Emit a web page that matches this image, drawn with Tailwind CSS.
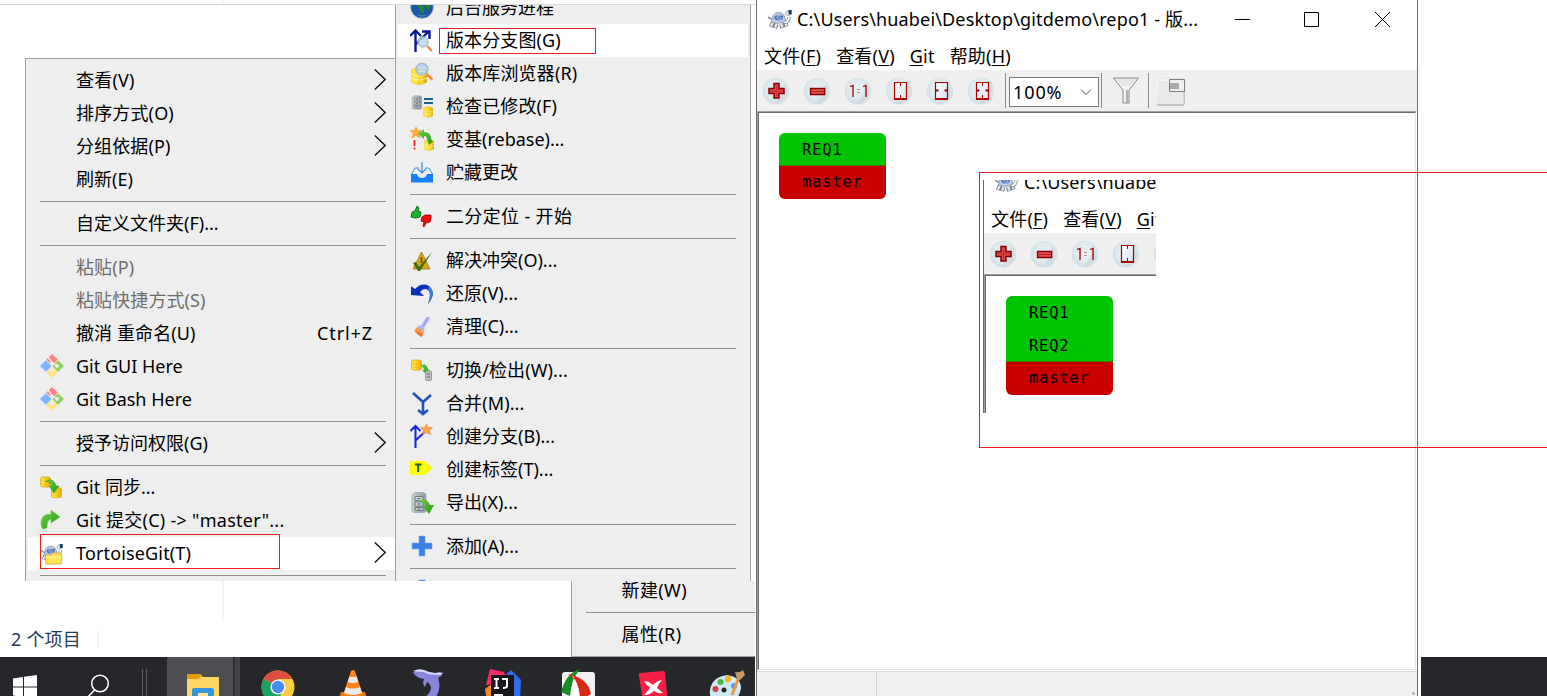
<!DOCTYPE html>
<html lang="zh-CN">
<head>
<meta charset="utf-8">
<title>TortoiseGit</title>
<script src="https://cdn.jsdelivr.net/npm/@tailwindcss/browser@4"></script>
</head>
<body class="w-[1547px] h-[696px] overflow-hidden bg-white text-black text-[18px] leading-[33px] whitespace-nowrap font-['Noto_Sans','Noto_Sans_CJK_SC',sans-serif]">
<svg class="absolute w-0 h-0">
  <defs>
    <linearGradient id="gold" x1="0" x2="1"><stop offset="0" stop-color="#ffe94d"/><stop offset=".5" stop-color="#fbd714"/><stop offset="1" stop-color="#dfa60c"/></linearGradient>
    <linearGradient id="steel" x1="0" x2="1"><stop offset="0" stop-color="#c9d0d4"/><stop offset="1" stop-color="#8d979d"/></linearGradient>
    <linearGradient id="leaf" x1="0" x2="1" y1="0" y2="1"><stop offset="0" stop-color="#6fd04a"/><stop offset="1" stop-color="#1f9a0c"/></linearGradient>
    <radialGradient id="orb" cx=".5" cy=".45" r=".55"><stop offset="0" stop-color="#eaf1f4"/><stop offset=".65" stop-color="#dfe9ee"/><stop offset="1" stop-color="#cfdde4"/></radialGradient>
    <linearGradient id="page" x1="0" x2="1" y1="0" y2="1"><stop offset="0" stop-color="#fff"/><stop offset="1" stop-color="#d5e2f5"/></linearGradient>
  </defs>
  <symbol id="chev" viewBox="0 0 12 21"><path d="M.8.6 11.2 10.5.8 20.4" fill="none" stroke="#111" stroke-width="1.4"/></symbol>
  <symbol id="git" viewBox="0 0 24 24">
    <path d="M12 0l5.600 5.600L12 11.200 6.400 5.600z" fill="#ff7f80"/><path d="M17.900 6.200L24 12l-6.100 6L12.400 12z" fill="#8dd35f"/><path d="M12 12.600l5.600 5.700L12 24l-5.600-5.700z" fill="#ffe680"/>
    <path d="M8 3l5 7M12 10v7M12 9l5 3" stroke="#eee" stroke-width="1.400" fill="none"/><circle cx="12" cy="9.500" r="1.800" fill="#eee"/><circle cx="17" cy="12" r="1.900" fill="#eee"/><circle cx="12" cy="16.500" r="1.900" fill="#eee"/><path d="M6 6.200l5.600 5.800L6 17.800 0 12z" fill="#80b3ff"/>
  </symbol>
  <symbol id="coin" viewBox="0 0 12 12"><rect x=".5" y=".5" width="11" height="11" rx="2.500" fill="url(#gold)" stroke="#d0a428" stroke-width=".8"/><path d="M1 4q5 2 10 0M1 8q5 2 10 0M6 1v10" fill="none" stroke="#eab818" stroke-width=".6"/></symbol>
  <symbol id="sync" viewBox="0 0 24 24"><use href="#coin" x="0" y="0" width="11" height="12"/><use href="#coin" x="11" y="11" width="11" height="11.500"/><path d="M5 6q6-5 10 1l1 3h3l-5 7-5-7h3q-2-5-7-4z" fill="url(#leaf)" stroke="#4e9f33" stroke-width=".6"/></symbol>
  <symbol id="commit" viewBox="0 0 24 24"><path d="M1 14Q1 5 11 5V1l9 7-9 6v-4Q7 10 7 19L3 20Q1 18 1 14z" fill="url(#leaf)" stroke="#74c74c" stroke-width=".6"/></symbol>
  <symbol id="turtle" viewBox="0 0 24 24">
    <path d="M5 12l-2 5M8.500 14l-1.500 4M13 14l1.500 4M17 12l1.500 4.500" stroke="#6c737d" stroke-width="4.200"/><path d="M5 12l-2 4.500M8.500 14l-1.500 3.500M13 14l1.500 3.500M17 12l1.500 4" stroke="#e8ebee" stroke-width="2.400"/>
    <path d="M0 7l4 2.500" stroke="#8b939e" stroke-width="1.500"/><path d="M16 12q5 1 5-5" stroke="#7b838d" stroke-width="3.600" fill="none"/><path d="M16 12q5 1 5-6" stroke="#f3f5f7" stroke-width="2.200" fill="none"/>
    <path d="M3.500 12Q4 2.500 10.500 2.500T17.500 11q-7 4-14 1z" fill="#c2d1ea" stroke="#8390a6" stroke-width=".9"/><ellipse cx="10.500" cy="7.800" rx="5" ry="3.300" fill="#8eabe2"/><path d="M9 6.200q-2.500 0-2 1.600t2 1.600V8.100M11 6.200v3M12.300 6.200h3M13.800 6.200v3" stroke="#2c4d94" fill="none" stroke-width=".8"/>
    <rect x="17.500" y="1" width="5" height="4.500" rx="2" fill="#eef1f4" stroke="#7b8692" stroke-width=".6"/><path d="M20.500 0h3.200v4.500h-3.200z" fill="#0f4560"/>
  </symbol>
  <symbol id="tfolder" viewBox="0 0 24 24"><use href="#turtle" width="24" height="22" y="1"/><path d="M5 12h6l2-2h8v3h1l-1 8H6z" fill="#ffe457" stroke="#d2a72b" stroke-width=".8"/><path d="M6 14h15" stroke="#fff5a0"/></symbol>
  <symbol id="globe" viewBox="0 0 24 24"><circle cx="12" cy="12" r="11.300" fill="#1b57a4" stroke="#8ba7c4" stroke-width=".7"/><path d="M7 6l6-1-3 5 5 2-2 7-3-3-2-5-4-3zM17 6l4 3-3 7-2-5z" fill="#258439"/><path d="M6 19q6 3 12 0-6 5-12 0z" fill="#4f9bd0"/></symbol>
  <symbol id="lens" viewBox="0 0 16 16"><path d="M10 10l5 5" stroke="#f08a3c" stroke-width="2.200"/><circle cx="6" cy="6" r="5.200" fill="#a9d1ec" fill-opacity=".85" stroke="#a7b9c4" stroke-width="1"/><path d="M2.500 5h7M3 7.500h6" stroke="#e4f4fd" stroke-width=".9"/></symbol>
  <symbol id="graph" viewBox="0 0 24 24"><path d="M5.500 23V2M0 7l5.500-5.500L11 7M6 15L18 3M12 2.500h7.500V10" fill="none" stroke="#0a1894" stroke-width="2.400"/><use href="#lens" x="7" y="7" width="16" height="16"/></symbol>
  <symbol id="stack" viewBox="0 0 16 18"><path d="M0 3q8-5 16 0v12q-8 5-16 0z" fill="url(#gold)" stroke="#e5b21a" stroke-width=".6"/><path d="M0 7q8 4 16 0M0 11q8 4 16 0M5 8v9M11 8v9" fill="none" stroke="#fff4a5" stroke-width=".9"/></symbol>
  <symbol id="repo" viewBox="0 0 24 24"><use href="#stack" x="1" y="5" width="16" height="18"/><use href="#lens" x="5" y="0" width="18.500" height="19"/></symbol>
  <symbol id="cab" viewBox="0 0 16 22"><path d="M1 3l3-2h9l2 2v16q0 2-2 2H3q-2 0-2-2z" fill="url(#steel)" stroke="#9aa3a8" stroke-width=".7"/><path d="M4 5h8v4H4zM4 10.500h8v4H4zM4 16h8v3H4z" fill="#cfd5d8" stroke="#657076" stroke-width=".9"/><path d="M6.500 7h3M6.500 12.500h3M6.500 17.500h3" stroke="#59646a" stroke-width="1.200"/></symbol>
  <symbol id="modified" viewBox="0 0 24 24"><use href="#cab" x="1" y="0" width="12" height="15"/><path d="M14 4h9M14 8h9" stroke="#1b638a" stroke-width="2"/><use href="#stack" x="13" y="11" width="10" height="12"/></symbol>
  <symbol id="rebase" viewBox="0 0 24 24"><path d="M6 0l1.700 3.500 4 .3-3 2.700 1.500 4.500L6 8.500 2 11l1.200-4.500-3-2.700 4-.3z" fill="#ffb13b" stroke="#f58f22" stroke-width=".5"/><use href="#stack" x="14" y="12" width="10" height="12"/><path d="M8 7l6-5v3q7 0 7 7l2 2-4 4-2-6q0-3-3-3v3z" fill="url(#leaf)"/><path d="M4.500 13v6M4.500 20.500v2" stroke="#f02020" stroke-width="1.800"/></symbol>
  <symbol id="stash" viewBox="0 0 24 24"><path d="M1 14L5 7h4M15 7h4l4 7" fill="#dcedfd" stroke="#4b98e8" stroke-width="1"/><path d="M1 13h6q1 4 5 4t5-4h6v8.500H1z" fill="#167ffb"/><path d="M12 1v10M8 8l4 4 4-4" stroke="#3e8bd9" stroke-width="1.200" fill="none"/></symbol>
  <symbol id="bisect" viewBox="0 0 24 24"><path d="M2 7l3-1 2-5 2 2-1 3 3 1-1 5-5 1-4-1z" fill="#16b72b" stroke="#0b5713" stroke-width=".8"/><path d="M12 12l3-2h6v4l-1 3-4 1-2 4-1-1 1-4-3-1z" fill="#f40d0d" stroke="#750909" stroke-width=".8"/></symbol>
  <symbol id="resolve" viewBox="0 0 24 24"><path d="M11.500 3L20 20H3z" fill="#dda216" stroke="#9b7a19" stroke-width=".8"/><path d="M11.500 8v6M11.500 16v1.500" stroke="#6d5508" stroke-width="1.800"/><path d="M3 14l3-1 3 5L22 3 10 22H8z" fill="#3d6e10"/></symbol>
  <symbol id="revert" viewBox="0 0 24 24"><path d="M1 4l4 3Q12 0 19 4q8 7-1 18 4-11 0-14-4-3-8 2l4 4-13-1z" fill="#0931ba"/><path d="M19 4q8 7-1 18 4-11 0-14z" fill="#3d76dc"/></symbol>
  <symbol id="clean" viewBox="0 0 24 24"><path d="M19 2q1 0 0 3l-5 8-3-2 5-8q2-2 3-1z" fill="#a6a8fb"/><path d="M10 10l5 4-2 3-6-5z" fill="#b3b4f2"/><path d="M7 12l7 5-2 5-8-6z" fill="#ff9a3c"/><path d="M5 17l8 1-2 4z" fill="#f36a44"/></symbol>
  <symbol id="switch" viewBox="0 0 24 24"><use href="#coin" x="1" y="1" width="11" height="12"/><path d="M10 8l4-2q4 2 4 6h2l-4 4-4-4h2q0-3-4-4z" fill="url(#leaf)"/><rect x="15.500" y="13" width="6" height="9.500" rx="1" fill="#b9bdbf" stroke="#8c9194" stroke-width=".8"/><path d="M17 16h3M17 19h3" stroke="#686e71"/></symbol>
  <symbol id="merge" viewBox="0 0 24 24"><path d="M3 1l10 9 8-7M13 10v12M8 18l5 4 5-4" fill="none" stroke="#2152b9" stroke-width="2.600"/></symbol>
  <symbol id="branch" viewBox="0 0 24 24"><path d="M5.500 24V3M.5 7l5-5 5 5M6 16L18 5" fill="none" stroke="#1220f0" stroke-width="2"/><path d="M16.500 0l1.500 3.500h4.500l-3 3 1 4-4-2-4 2 1-4-3-3h4z" fill="#ffa24d" stroke="#d97726" stroke-width=".5"/></symbol>
  <symbol id="tag" viewBox="0 0 24 24"><path d="M0 4h15l7 7-7 7H0z" fill="#ffff00"/><path d="M5 7.500h6.500M8.200 7.500V15" stroke="#126312" stroke-width="2" fill="none"/></symbol>
  <symbol id="export" viewBox="0 0 24 24"><use href="#cab" x="1" y="0" width="16" height="23"/><path d="M8 10q8-5 12 4h4l-5 9-6-8h3q-2-4-8-5z" fill="url(#leaf)"/></symbol>
  <symbol id="plus" viewBox="0 0 24 24"><path d="M9 2h6v7h7v6h-7v7H9v-7H2V9h7z" fill="#3a80e4" stroke="#77a6e2" stroke-width=".6"/></symbol>
  <symbol id="orbbg" viewBox="0 0 28 28"><circle cx="14" cy="14" r="13.300" fill="url(#orb)"/><path d="M22 6q6 8 0 16-5 5-11 4 6-3 8-8 3-6 3-12z" fill="#c8d3d9" fill-opacity=".55"/></symbol>
  <symbol id="zin" viewBox="0 0 28 28"><use href="#orbbg"/><path d="M12 6.500h5v5h5v5h-5v4.500h-5v-4.500h-5v-5h5z" fill="#cf4a4a" stroke="#880000" stroke-width="1.500"/><path d="M14.500 9.500v9M9 14h11" stroke="#e02222" stroke-width="1"/></symbol>
  <symbol id="zout" viewBox="0 0 28 28"><use href="#orbbg"/><path d="M7.600 11.600h14V17.500h-14z" fill="#dc5858" stroke="#880000" stroke-width="1.500"/><path d="M9 14.500h12" stroke="#c61616"/></symbol>
  <symbol id="zone" viewBox="0 0 28 28"><use href="#orbbg"/><path d="M6 9.500l3-1V20M19 9.500l3-1V20" fill="none" stroke="#a00000" stroke-width="1.300"/><path d="M13 12.500h3M13 15.500h3" stroke="#cf8c8c" stroke-width="1"/></symbol>
  <symbol id="zh" viewBox="0 0 28 28"><use href="#orbbg"/><path d="M9.500 5.500h12V22h-12z" fill="url(#page)" stroke="#b00000" stroke-width="1.200"/><path d="M9 22h13" stroke="#b00000" stroke-width="2"/><path d="M15.500 6v3M15.500 18v4" stroke="#b00000"/></symbol>
  <symbol id="zw" viewBox="0 0 28 28"><use href="#orbbg"/><path d="M9.500 5.500h12V22h-12z" fill="url(#page)" stroke="#a00000" stroke-width="1.200"/><path d="M9 22h13" stroke="#b00000" stroke-width="2"/><path d="M10 13.500h2.500M18.500 13.500H21" stroke="#900000" stroke-width="2"/></symbol>
  <symbol id="za" viewBox="0 0 28 28"><use href="#orbbg"/><path d="M9.500 5.500h12V22h-12z" fill="url(#page)" stroke="#b00000" stroke-width="1.200"/><path d="M9 22h13" stroke="#b00000" stroke-width="2"/><path d="M10 13.500h2.500M18.500 13.500H21" stroke="#900000" stroke-width="2"/><path d="M15.500 6v3M15.500 18v4" stroke="#b00000"/></symbol>
</svg>

<div class="relative flex h-full">
  <!-- Explorer window -->
  <section class="relative flex flex-col w-[755px] h-full shrink-0">
    <div class="h-[5px] border-b border-[#d9d9d9] flex"><div class="w-[222px]"></div><div class="w-[2px] h-[3px] bg-[#f5f5f5]"></div></div>
    <div class="flex-1 flex flex-col justify-end"><div class="ml-[222px] w-[2px] h-[41px] bg-[#f5f5f5]"></div></div>
    <div class="h-[35px] flex items-center pl-[11px] text-[#1e395b]"><span class="tracking-[0.2px]">2 个项目</span><div class="ml-[16px] w-[2px] h-[17px] bg-[#f5f5f5]"></div></div>
    <!-- Taskbar -->
    <footer class="h-[39px] bg-[#26272b] flex overflow-hidden">
      <div class="w-[50px] pt-[18px] pl-[13px]"><svg class="w-6 h-6" viewBox="0 0 24 24" fill="#fff"><path d="M0 3.500L10 2v9.500H0zM11 1.800L24 0v11.500H11zM0 12.500h10V22L0 20.500zM11 12.500h13V24l-13-2z"/></svg></div>
      <div class="w-[93px] pt-[17px] pl-[36px]"><svg class="w-6 h-7" viewBox="0 0 24 28" fill="none" stroke="#fff" stroke-width="1.500"><circle cx="14" cy="9.500" r="8.300"/><path d="M8.500 16L0 25"/></svg></div>
      <div class="w-[24px] pt-3 flex gap-[3px] -ml-[1px] mr-[1px]"><div class="w-px h-8 bg-[#5d5e61]"></div><div class="w-px h-8 bg-[#5d5e61]"></div></div>
      <div class="w-[66px] bg-[#4d4e51] pt-[17px] pl-[20px]"><svg class="w-8 h-6" viewBox="0 0 32 24"><path d="M0 0h13l3 3h16v21H0z" fill="#ffd767"/><path d="M0 0h13l2 2-4 3H0z" fill="#e09c09"/><path d="M5 24V16q0-2 2-2h17q3 0 3 2v8z" fill="#3695dd"/><path d="M11 19h10v5H11z" fill="#ffe69a"/></svg></div>
      <div class="w-[2px] bg-[#303135]"></div><div class="w-[5px] bg-[#434447]"></div>
      <div class="w-[75px] pt-[13px] flex justify-center"><svg class="w-[34px] h-[34px]" viewBox="0 0 34 34"><circle cx="17" cy="17" r="16.500" fill="#ffcd42"/><path d="M17 17L2.700 8.700A16.500 16.500 0 0 1 31.300 9H17z" fill="#dc4e41"/><path d="M2.700 8.700A16.500 16.500 0 0 0 15 33.400l7-12.200-5-4.200z" fill="#1aa261"/><circle cx="17" cy="17" r="7.600" fill="#fff"/><circle cx="17" cy="17" r="6.200" fill="#4c8bf5"/></svg></div>
      <div class="w-[75px] pt-[13px] flex justify-center"><svg class="w-7 h-8" viewBox="0 0 28 32"><path d="M2 22h24l3 9H-1z" fill="#ee7410"/><path d="M12 1q2-2 4 0l8 24q-10 4-20 0z" fill="#f8841a"/><path d="M10.500 6.500q3.500 1 7 0l1.800 5.500q-5.300 2-10.600 0zM7 17q7 3 14 0l2 6q-9 4-18 0z" fill="#e8eaec"/></svg></div>
      <div class="w-[75px] pt-[11px] flex justify-center"><svg class="w-8 h-8" viewBox="0 0 32 32"><path d="M1 4q8-4 17 0l5 1q4-1 8 0-1 3-4 4-1 2 0 5 2 9-5 18H7q11-4 12-12-1-5-4-6l-2 5q-3-3-1-8Q4 10 1 4z" fill="#8984dc"/><path d="M1 3q8-4 15 1l7 1q5-1 8 0l-3 2q-13 0-16-3-5 0-11-1z" fill="#d5dcf4"/></svg></div>
      <div class="w-[75px] pt-[12px] flex justify-center"><svg class="w-9 h-8" viewBox="0 0 36 32"><path d="M5 0l14 3 4 10L1 16z" fill="#fb2c69"/><path d="M0 20l8-6v18H2z" fill="#f58a24"/><path d="M18 8l8-7 10 10-1 21H21z" fill="#2f6ee8"/><path d="M6 6h23v26H6z" fill="#17171b"/><path d="M9 10h5M11.500 10v9M9 19h5M17 10h5v7q0 2-4 2" fill="none" stroke="#fff" stroke-width="2"/><path d="M9 25h9v2H9z" fill="#fff"/></svg></div>
      <div class="w-[75px] pt-[11px] flex justify-center"><svg class="w-[34px] h-8" viewBox="0 0 34 32"><rect x="1" y="4" width="33" height="34" rx="3" fill="#f1f1f1"/><path d="M19 1Q5 5 0 24l9 4Q10 12 19 1z" fill="#149020"/><path d="M7 6q20 4 23 20l-11 6Q19 13 7 6z" fill="#dc2714"/><path d="M13 9q-3 9-3 20h8Q18 15 11 8z" fill="#fff"/></svg></div>
      <div class="w-[75px] pt-[13px] flex justify-center"><svg class="w-8 h-8" viewBox="0 0 32 32"><path d="M2 6q-1-3 2-3L25 1q3-1 3 2l3 29H6z" fill="#f51f45"/><path d="M7 11q5 0 9 4 3-4 9-5-4 5-5 8 3 2 6 5-5 1-9-2-4 4-10 4 5-5 6-8-4-2-6-6z" fill="#fff"/></svg></div>
      <div class="w-[65px] pt-[13px] pl-[19px]"><svg class="w-[38px] h-8" viewBox="0 0 38 32"><path d="M1 20Q3 7 18 5q14 2 14 13-2 14-14 14H5q-5-5-4-12z" fill="#cfe8f6"/><circle cx="6.500" cy="19" r="3" fill="#dd3f45"/><circle cx="11.500" cy="12" r="3" fill="#4fb343"/><circle cx="19" cy="9" r="3.200" fill="#f4b52c"/><circle cx="15" cy="20" r="2.500" fill="#26272b"/><circle cx="25" cy="16" r="3" fill="#589add"/><path d="M30 7l-7 18" stroke="#ef9438" stroke-width="3"/><path d="M26 2q5 1 8-2l2 5-5 5-3-1z" fill="#c39a68"/></svg></div>
    </footer>

    <!-- Folder context menu -->
    <nav class="absolute left-[25px] top-[58px] w-[370px] h-[523px] overflow-hidden border-t border-l border-[#a0a0a0] bg-[#eeeeee] pt-[5px]">
      <div class="h-[33px] pl-[50px] pr-[9px] flex justify-between"><span class="tracking-[0.2px]">查看(V)</span><svg class="w-3 h-[21px] mt-[5px]"><use href="#chev"/></svg></div>
      <div class="h-[33px] pl-[50px] pr-[9px] flex justify-between"><span class="tracking-[0.15px]">排序方式(O)</span><svg class="w-3 h-[21px] mt-[5px]"><use href="#chev"/></svg></div>
      <div class="h-[33px] pl-[50px] pr-[9px] flex justify-between"><span class="tracking-[0.1px]">分组依据(P)</span><svg class="w-3 h-[21px] mt-[5px]"><use href="#chev"/></svg></div>
      <div class="h-[33px] pl-[50px]">刷新(E)</div>
      <div class="my-[5px] ml-[14px] mr-[9px] h-px bg-[#919191]"></div>
      <div class="h-[33px] pl-[50px]">自定义文件夹(F)...</div>
      <div class="my-[5px] ml-[14px] mr-[9px] h-px bg-[#919191]"></div>
      <div class="h-[33px] pl-[50px] text-[#6d6d6d] tracking-[0.1px]">粘贴(P)</div>
      <div class="h-[33px] pl-[50px] text-[#6d6d6d] tracking-[0.1px]">粘贴快捷方式(S)</div>
      <div class="h-[33px] pl-[50px] pr-[22px] flex justify-between"><span class="tracking-[0.1px]">撤消 重命名(U)</span><span class="tracking-[0.9px]">Ctrl+Z</span></div>
      <div class="h-[33px] pl-[14px] flex gap-3"><svg class="w-6 h-6 mt-1"><use href="#git"/></svg><span>Git GUI Here</span></div>
      <div class="h-[33px] pl-[14px] flex gap-3"><svg class="w-6 h-6 mt-1"><use href="#git"/></svg><span>Git Bash Here</span></div>
      <div class="my-[5px] ml-[14px] mr-[9px] h-px bg-[#919191]"></div>
      <div class="h-[33px] pl-[50px] pr-[9px] flex justify-between"><span>授予访问权限(G)</span><svg class="w-3 h-[21px] mt-[5px]"><use href="#chev"/></svg></div>
      <div class="my-[5px] ml-[14px] mr-[9px] h-px bg-[#919191]"></div>
      <div class="h-[33px] pl-[14px] flex gap-3"><svg class="w-6 h-6 mt-[5px]"><use href="#sync"/></svg><span>Git 同步...</span></div>
      <div class="h-[33px] pl-[14px] flex gap-3"><svg class="w-6 h-6 mt-[5px]"><use href="#commit"/></svg><span class="tracking-[0.27px]">Git 提交(C) -&gt; "master"...</span></div>
      <div class="relative h-[33px] ml-[2px] pl-3 pr-[9px] flex bg-white"><svg class="w-6 h-6 mt-[6px] mr-3"><use href="#tfolder"/></svg><span class="tracking-[0.15px]">TortoiseGit(T)</span><svg class="w-3 h-[21px] mt-[5px] ml-auto"><use href="#chev"/></svg>
        <div class="absolute left-3 -top-[3px] w-[240px] h-[35px] border border-[#ed1c24]"></div></div>
      <div class="my-[5px] ml-[14px] mr-[9px] h-px bg-[#919191]"></div>
    </nav>

    <!-- TortoiseGit submenu -->
    <nav class="absolute left-[395px] top-[5px] w-[356px] h-[576px] overflow-hidden border-x border-[#a0a0a0] bg-[#eeeeee]">
      <div class="-mt-[14px] h-[33px] pl-[14px] flex gap-3"><svg class="w-6 h-6 mt-1"><use href="#globe"/></svg><span>后台服务进程</span></div>
      <div class="relative h-[33px] mx-[2px] pl-3 flex gap-3 bg-white"><svg class="w-6 h-6 mt-[5px]"><use href="#graph"/></svg><span class="tracking-[0.1px]">版本分支图(G)</span>
        <div class="absolute left-[41px] top-1 w-[157px] h-[26px] border border-[#ed1c24]"></div></div>
      <div class="h-[33px] pl-[14px] flex gap-3"><svg class="w-6 h-6 mt-[5px]"><use href="#repo"/></svg><span class="tracking-[0.15px]">版本库浏览器(R)</span></div>
      <div class="h-[33px] pl-[14px] flex gap-3"><svg class="w-6 h-6 mt-[5px]"><use href="#modified"/></svg><span class="tracking-[0.1px]">检查已修改(F)</span></div>
      <div class="h-[33px] pl-[14px] flex gap-3"><svg class="w-6 h-6 mt-1"><use href="#rebase"/></svg><span>变基(rebase)...</span></div>
      <div class="h-[33px] pl-[14px] flex gap-3"><svg class="w-6 h-6 mt-[5px]"><use href="#stash"/></svg><span>贮藏更改</span></div>
      <div class="my-[5px] mx-[14px] h-px bg-[#919191]"></div>
      <div class="h-[33px] pl-[14px] flex gap-3"><svg class="w-6 h-6 mt-[5px]"><use href="#bisect"/></svg><span class="tracking-[0.35px]">二分定位 - 开始</span></div>
      <div class="my-[5px] mx-[14px] h-px bg-[#919191]"></div>
      <div class="h-[33px] pl-[14px] flex gap-3"><svg class="w-6 h-6 mt-[5px]"><use href="#resolve"/></svg><span>解决冲突(O)...</span></div>
      <div class="h-[33px] pl-[14px] flex gap-3"><svg class="w-6 h-6 mt-[5px]"><use href="#revert"/></svg><span>还原(V)...</span></div>
      <div class="h-[33px] pl-[14px] flex gap-3"><svg class="w-6 h-6 mt-[5px]"><use href="#clean"/></svg><span>清理(C)...</span></div>
      <div class="my-[5px] mx-[14px] h-px bg-[#919191]"></div>
      <div class="h-[33px] pl-[14px] flex gap-3"><svg class="w-6 h-6 mt-1"><use href="#switch"/></svg><span class="tracking-[0.1px]">切换/检出(W)...</span></div>
      <div class="h-[33px] pl-[14px] flex gap-3"><svg class="w-6 h-6 mt-[5px]"><use href="#merge"/></svg><span class="tracking-[0.1px]">合并(M)...</span></div>
      <div class="h-[33px] pl-[14px] flex gap-3"><svg class="w-6 h-6 mt-1"><use href="#branch"/></svg><span>创建分支(B)...</span></div>
      <div class="h-[33px] pl-[14px] flex gap-3"><svg class="w-6 h-6 mt-1"><use href="#tag"/></svg><span>创建标签(T)...</span></div>
      <div class="h-[33px] pl-[14px] flex gap-3"><svg class="w-6 h-6 mt-[5px]"><use href="#export"/></svg><span>导出(X)...</span></div>
      <div class="my-[5px] mx-[14px] h-px bg-[#919191]"></div>
      <div class="h-[33px] pl-[14px] flex gap-3"><svg class="w-6 h-6 mt-1"><use href="#plus"/></svg><span>添加(A)...</span></div>
      <div class="my-[5px] mx-[14px] h-px bg-[#919191]"></div>
      <div class="h-[33px] pl-[14px] flex gap-3"><svg class="w-6 h-6 mt-1"><use href="#plus"/></svg></div>
    </nav>

    <!-- Tail of the folder menu -->
    <nav class="absolute left-[571px] top-[581px] w-[184px] h-[76px] overflow-hidden border-l border-b border-[#a0a0a0] bg-[#eeeeee]">
      <div class="-mt-[7px] h-[33px] pl-[49.5px] tracking-[0.4px]">新建(W)</div>
      <div class="my-[5px] ml-[14px] h-px bg-[#919191]"></div>
      <div class="h-[33px] pl-[49.5px] tracking-[0.4px]">属性(R)</div>
    </nav>
  </section>

  <!-- Revision graph window -->
  <section class="ml-px flex flex-col w-[662px] h-full shrink-0 border-x border-[#6d6d6d]">
    <header class="h-[38px] flex items-center pl-[11px]">
      <svg class="w-6 h-6 mt-[5px]"><use href="#turtle"/></svg>
      <span class="ml-[5px] w-[402px] tracking-[0.16px]">C:\Users\huabei\Desktop\gitdemo\repo1 - 版...</span>
      <svg class="ml-auto mr-[26px] w-[158px] h-4" viewBox="0 0 158 16" fill="none" stroke="#000"><path d="M2 8.500h15M71.500 1.500h14v14h-14zM142 1l15 15M157 1l-15 15"/></svg>
    </header>
    <div class="h-[32px] pt-1 flex items-center gap-[15px] pl-[7px] tracking-[0.2px]"><span>文件(<u class="underline-offset-2">F</u>)</span><span>查看(<u class="underline-offset-2">V</u>)</span><span><u class="underline-offset-2">G</u>it</span><span>帮助(<u class="underline-offset-2">H</u>)</span></div>
    <div class="h-[41px] bg-[#efefef] flex items-center pl-[5px]">
      <div class="flex gap-[13px]">
        <svg class="w-7 h-7"><use href="#zin"/></svg><svg class="w-7 h-7"><use href="#zout"/></svg><svg class="w-7 h-7"><use href="#zone"/></svg><svg class="w-7 h-7"><use href="#zh"/></svg><svg class="w-7 h-7"><use href="#zw"/></svg><svg class="w-7 h-7"><use href="#za"/></svg>
      </div>
      <div class="ml-[10px] w-px h-[35px] bg-[#8d8d8d]"></div>
      <div class="ml-[3px] w-[90px] h-[30px] mt-[2px] bg-white border border-[#7a7a7a] flex items-center pl-[3px]"><span class="w-[67px] pt-px tracking-[0.9px]">100%</span><svg class="w-3 h-2" viewBox="0 0 12 8"><path d="M1 1.500l5 5 5-5" fill="none" stroke="#555"/></svg></div>
      <div class="ml-[2px] w-px h-[35px] bg-[#8d8d8d]"></div>
      <svg class="ml-[11px] w-[26px] h-[27px]" viewBox="0 0 26 27"><path d="M.5 1h25L16 13v13h-6V13z" fill="#f4f4f4" stroke="#878787"/><path d="M3 2h20l-6 7H9z" fill="#e6e6e6"/><path d="M14 13v13" stroke="#b0b0b0" stroke-width="2"/></svg>
      <div class="ml-[9px] w-px h-[35px] bg-[#8d8d8d]"></div>
      <svg class="ml-2 w-7 h-7 mt-[3px]" viewBox="0 0 28 28"><path d="M0 0h28v27H0z" fill="#e9e9e9"/><path d="M0 27h27M27.500 13v13" stroke="#c6c6c6" stroke-width="2"/><path d="M0 2h12M.5 2v10" stroke="#eaf5ff" stroke-width="2"/><path d="M12.500 1.500h15v12h-15z" fill="#eee" stroke="#7d7d7d"/><path d="M13 5h9v6h-9z" fill="#a7a7a7"/></svg>
    </div>
    <div class="flex-1 border-t border-l border-[#a0a0a0] mr-px"><div class="h-full border-t border-l border-t-[#696969] border-l-[#696969] border-r border-b border-r-[#e3e3e3] border-b-[#e3e3e3] pl-5 pt-5">
      <div class="w-[107px] rounded-md overflow-hidden font-['DejaVu_Sans_Mono',monospace] text-[15.5px] tracking-[0.75px]">
        <div class="h-[33px] pt-px pl-[23px] bg-[#00c400] border-b border-[#3f7a00]">REQ1</div>
        <div class="h-[33px] pl-[23px] bg-[#c80000]">master</div>
      </div>
    </div></div>
    <footer class="mt-px h-[25px] border-t border-[#d9d9d9] bg-[#f0f0f0] flex"><div class="ml-[119px] w-px bg-[#d5d5d5]"></div><div class="ml-auto mt-[20px] mr-[2px] w-[3px] h-[3px] bg-[#bfbfbf]"></div></footer>
  </section>

  <!-- Desktop taskbar, right end -->
  <div class="ml-[3px] mt-[657px] flex-1 bg-[#26272b]"></div>

  <!-- Callout showing the graph after the second branch -->
  <aside class="absolute left-[979px] top-[172px] w-[570px] h-[276px] border border-[#ed1c24]">
    <div class="ml-[3px] mt-[7px] w-[173px] h-[233px] overflow-hidden border-l border-[#6d6d6d] bg-white flex flex-col">
      <div class="-mt-[17px] h-[38px] shrink-0 flex items-center pl-[11px]"><svg class="w-6 h-6 mt-[5px] shrink-0"><use href="#turtle"/></svg><span class="ml-[5px] tracking-[0.1px]">C:\Users\huabei</span></div>
      <div class="h-[32px] pt-1 shrink-0 flex items-center gap-[15px] pl-[7px] tracking-[0.2px]"><span>文件(<u class="underline-offset-2">F</u>)</span><span>查看(<u class="underline-offset-2">V</u>)</span><span><u class="underline-offset-2">G</u>it</span></div>
      <div class="h-[41px] shrink-0 bg-[#efefef] flex items-center pl-[5px] gap-[13px]">
        <svg class="w-7 h-7 shrink-0"><use href="#zin"/></svg><svg class="w-7 h-7 shrink-0"><use href="#zout"/></svg><svg class="w-7 h-7 shrink-0"><use href="#zone"/></svg><svg class="w-7 h-7 shrink-0"><use href="#zh"/></svg><svg class="w-7 h-7 shrink-0"><use href="#zw"/></svg>
      </div>
      <div class="flex-1 border-t border-l border-[#a0a0a0]"><div class="h-full border-t border-l border-[#696969] pl-5 pt-5">
        <div class="w-[107px] rounded-md overflow-hidden font-['DejaVu_Sans_Mono',monospace] text-[15.5px] tracking-[0.75px]">
          <div class="h-[33px] pt-px pl-[23px] bg-[#00c400]">REQ1</div>
          <div class="h-[33px] pt-px pl-[23px] bg-[#00c400] border-b border-[#3f7a00]">REQ2</div>
          <div class="h-[33px] pl-[23px] bg-[#c80000]">master</div>
        </div>
      </div></div>
    </div>
  </aside>
</div>
</body>
</html>
